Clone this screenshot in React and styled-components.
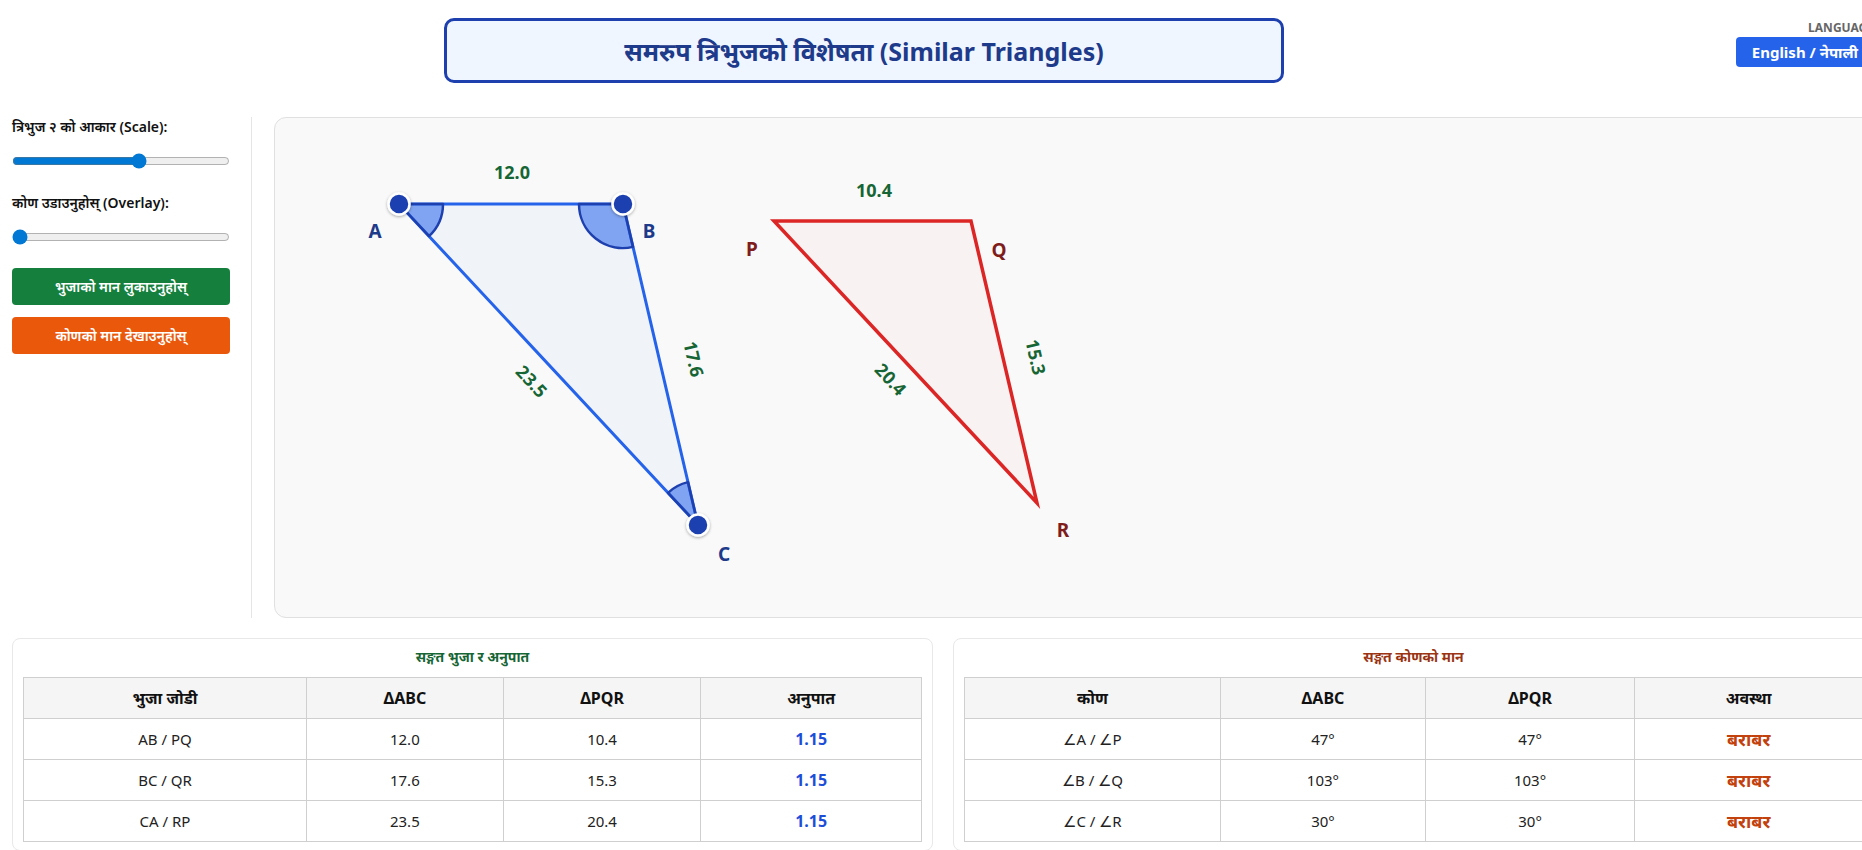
import React from "react";
import styled, { createGlobalStyle } from "styled-components";

const GlobalStyle = createGlobalStyle`
  body {
    margin: 0;
    overflow: hidden;
    background: #fff;
    font-family: "Noto Sans", "Open Sans", sans-serif;
    color: #111;
  }
`;

const Page = styled.div`
  width: 1886px;
  box-sizing: border-box;
  padding: 18px 12px 0;
`;

const Header = styled.header`
  display: flex;
  align-items: flex-start;
`;

const TitleBox = styled.div`
  margin-left: 432px;
  width: 840px;
  height: 65px;
  box-sizing: border-box;
  border: 3px solid #1e40af;
  border-radius: 10px;
  background: #eff6ff;
  display: flex;
  align-items: center;
  justify-content: center;
`;

const Title = styled.h1`
  margin: 0;
  font-size: 25px;
  font-weight: 700;
  color: #1e3a8a;
`;

const LangBox = styled.div`
  margin-left: auto;
  margin-top: 3px;
  display: flex;
  flex-direction: column;
  align-items: flex-end;
`;

const LangLabel = styled.span`
  font-size: 12px;
  font-weight: 700;
  color: #666;
  line-height: 14px;
  margin-bottom: 2px;
`;

const LangButton = styled.button`
  border: none;
  border-radius: 4px;
  background: #2563eb;
  color: #fff;
  height: 30px;
  padding: 0 16px;
  font-family: inherit;
  font-size: 15px;
  font-weight: 700;
`;

const Main = styled.main`
  display: flex;
  margin-top: 34px;
  height: 501px;
`;

const Sidebar = styled.aside`
  width: 218px;
  flex-shrink: 0;
  padding: 1px 21px 0 0;
  margin-right: 22px;
  border-right: 1px solid #e5e5e5;
`;

const ControlGroup = styled.div`
  margin-bottom: ${(p) => p.$gap}px;
`;

const ControlLabel = styled.label`
  display: block;
  font-size: 14px;
  font-weight: 600;
  line-height: 18px;
  margin-bottom: 17px;
`;

const Slider = styled.input`
  display: block;
  width: 100%;
  margin: 0;
  height: 16px;
  accent-color: #0078d4;
`;

const ActionButton = styled.button`
  display: block;
  width: 100%;
  height: 37px;
  margin-bottom: 12px;
  border: none;
  border-radius: 4px;
  background: ${(p) => p.$bg};
  color: #fff;
  font-family: inherit;
  font-size: 14px;
  font-weight: 600;
`;

const Canvas = styled.section`
  flex: 1;
  border: 1px solid #e0e0e0;
  border-radius: 12px;
  background: #f9f9f9;
  overflow: hidden;
`;

const Drawing = styled.svg`
  display: block;
  font-family: "Noto Sans", "Open Sans", sans-serif;
  font-weight: 700;
`;

const Tables = styled.div`
  display: grid;
  grid-template-columns: 1fr 1fr;
  gap: 20px;
  margin-top: 20px;
`;

const Card = styled.div`
  border: 1px solid #e8e8e8;
  border-radius: 8px;
  padding: 8px 10px;
  background: #fff;
`;

const CardTitle = styled.h3`
  margin: 0 0 10px;
  text-align: center;
  font-size: 14px;
  line-height: 20px;
  font-weight: 700;
  color: ${(p) => p.$color};
`;

const Table = styled.table`
  width: 100%;
  border-collapse: collapse;
  table-layout: fixed;
`;

const Th = styled.th`
  height: 40px;
  padding: 0;
  border: 1px solid #cfcfcf;
  background: #f5f5f5;
  font-size: 16px;
  font-weight: 700;
  text-align: center;
  width: ${(p) => p.$w};
`;

const Td = styled.td`
  height: 40px;
  padding: 0;
  border: 1px solid #cfcfcf;
  text-align: center;
  font-size: 15px;
  color: #222;
`;

const Ratio = styled.span`
  color: #1d4ed8;
  font-weight: 700;
  font-size: 16px;
`;

const Status = styled.span`
  color: #c2410c;
  font-weight: 700;
  font-size: 18px;
`;

const sideRows = [
  ["AB / PQ", "12.0", "10.4", "1.15"],
  ["BC / QR", "17.6", "15.3", "1.15"],
  ["CA / RP", "23.5", "20.4", "1.15"],
];

const angleRows = [
  ["∠A / ∠P", "47°", "47°"],
  ["∠B / ∠Q", "103°", "103°"],
  ["∠C / ∠R", "30°", "30°"],
];

const A = [124, 86];
const B = [348, 86];
const C = [423, 407];
const P = [499, 103];
const Q = [696, 103];
const R = [762, 385];

const pts = (...list) => list.map((p) => p.join(",")).join(" ");

function SideLabel({ x, y, angle = 0, children }) {
  return (
    <text
      x={x}
      y={y}
      fontSize="18"
      fill="#166534"
      textAnchor="middle"
      dominantBaseline="central"
      transform={angle ? `rotate(${angle} ${x} ${y})` : undefined}
    >
      {children}
    </text>
  );
}

function VertexLabel({ x, y, color, children }) {
  return (
    <text x={x} y={y} fontSize="19" fill={color} textAnchor="middle" dominantBaseline="central">
      {children}
    </text>
  );
}

function TriangleView() {
  return (
    <Drawing width="1000" height="499" viewBox="0 0 1000 499">
      <defs>
        <filter id="dotShadow" x="-50%" y="-50%" width="200%" height="200%">
          <feDropShadow dx="0" dy="1" stdDeviation="1.5" floodColor="#000" floodOpacity="0.35" />
        </filter>
      </defs>

      <polygon points={pts(A, B, C)} fill="rgba(37,99,235,0.04)" stroke="#2563eb" strokeWidth="3" strokeLinejoin="round" />
      <polygon points={pts(P, Q, R)} fill="rgba(220,38,38,0.03)" stroke="#dc2626" strokeWidth="3.5" />

      <g fill="rgba(37,99,235,0.55)" stroke="#1e40af" strokeWidth="2.5" strokeLinejoin="round">
        <path d="M124 86 L168 86 A44 44 0 0 1 154 118.2 Z" />
        <path d="M348 86 L358 128.85 A44 44 0 0 1 304 86 Z" />
        <path d="M423 407 L393 374.8 A44 44 0 0 1 413 364.15 Z" />
      </g>

      <g fill="#1e40af" stroke="#fff" strokeWidth="2.5" filter="url(#dotShadow)">
        <circle cx={A[0]} cy={A[1]} r="10.5" />
        <circle cx={B[0]} cy={B[1]} r="10.5" />
        <circle cx={C[0]} cy={C[1]} r="10.5" />
      </g>

      <SideLabel x={237} y={54}>12.0</SideLabel>
      <SideLabel x={419} y={241} angle={77}>17.6</SideLabel>
      <SideLabel x={257} y={263} angle={47}>23.5</SideLabel>
      <SideLabel x={599} y={72}>10.4</SideLabel>
      <SideLabel x={761} y={239} angle={77}>15.3</SideLabel>
      <SideLabel x={616} y={261} angle={47}>20.4</SideLabel>

      <VertexLabel x={100} y={113} color="#1e3a8a">A</VertexLabel>
      <VertexLabel x={374} y={113} color="#1e3a8a">B</VertexLabel>
      <VertexLabel x={449} y={436} color="#1e3a8a">C</VertexLabel>
      <VertexLabel x={477} y={131} color="#7f1d1d">P</VertexLabel>
      <VertexLabel x={724} y={132} color="#7f1d1d">Q</VertexLabel>
      <VertexLabel x={788} y={412} color="#7f1d1d">R</VertexLabel>
    </Drawing>
  );
}

export default function App() {
  return (
    <>
      <GlobalStyle />
      <Page>
        <Header>
          <TitleBox>
            <Title>समरुप त्रिभुजको विशेषता (Similar Triangles)</Title>
          </TitleBox>
          <LangBox>
            <LangLabel>LANGUAGE</LangLabel>
            <LangButton>English / नेपाली</LangButton>
          </LangBox>
        </Header>

        <Main>
          <Sidebar>
            <ControlGroup $gap={25}>
              <ControlLabel>त्रिभुज २ को आकार (Scale):</ControlLabel>
              <Slider type="range" min="0" max="100" defaultValue="59" />
            </ControlGroup>
            <ControlGroup $gap={23}>
              <ControlLabel>कोण उडाउनुहोस् (Overlay):</ControlLabel>
              <Slider type="range" min="0" max="100" defaultValue="0" />
            </ControlGroup>
            <ActionButton $bg="#15803d">भुजाको मान लुकाउनुहोस्</ActionButton>
            <ActionButton $bg="#ea580c">कोणको मान देखाउनुहोस्</ActionButton>
          </Sidebar>
          <Canvas>
            <TriangleView />
          </Canvas>
        </Main>

        <Tables>
          <Card>
            <CardTitle $color="#166534">सङ्गत भुजा र अनुपात</CardTitle>
            <Table>
              <thead>
                <tr>
                  <Th $w="31.4%">भुजा जोडी</Th>
                  <Th $w="21.8%">ΔABC</Th>
                  <Th $w="21.9%">ΔPQR</Th>
                  <Th>अनुपात</Th>
                </tr>
              </thead>
              <tbody>
                {sideRows.map(([pair, a, b, r]) => (
                  <tr key={pair}>
                    <Td>{pair}</Td>
                    <Td>{a}</Td>
                    <Td>{b}</Td>
                    <Td>
                      <Ratio>{r}</Ratio>
                    </Td>
                  </tr>
                ))}
              </tbody>
            </Table>
          </Card>
          <Card>
            <CardTitle $color="#9a3412">सङ्गत कोणको मान</CardTitle>
            <Table>
              <thead>
                <tr>
                  <Th $w="28.4%">कोण</Th>
                  <Th $w="22.7%">ΔABC</Th>
                  <Th $w="23.2%">ΔPQR</Th>
                  <Th>अवस्था</Th>
                </tr>
              </thead>
              <tbody>
                {angleRows.map(([pair, a, b]) => (
                  <tr key={pair}>
                    <Td>{pair}</Td>
                    <Td>{a}</Td>
                    <Td>{b}</Td>
                    <Td>
                      <Status>बराबर</Status>
                    </Td>
                  </tr>
                ))}
              </tbody>
            </Table>
          </Card>
        </Tables>
      </Page>
    </>
  );
}
